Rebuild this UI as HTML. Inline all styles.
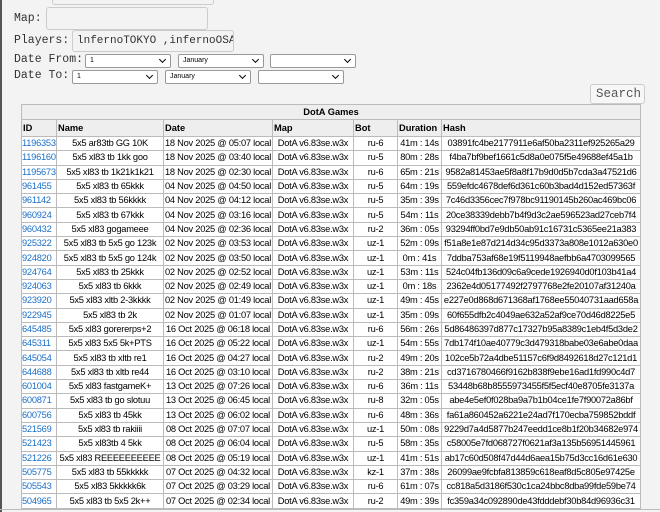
<!DOCTYPE html>
<html><head><style>
body{margin:0;width:660px;height:512px;background:#f3f3f4;font-family:"Liberation Mono",monospace;position:relative;overflow:hidden}
.lb{position:absolute;left:0;top:0;width:2px;height:512px;background:#555}
.lbl{position:absolute;left:14px;font-size:11.5px;color:#333}
.inp{position:absolute;background:#f3f3f4;border:1px solid #ccc;border-radius:3px;box-sizing:border-box}
.sel{position:absolute;height:14px;background:#fff;border:1px solid #999;border-radius:2px;box-sizing:border-box;font:7px "Liberation Sans",sans-serif;padding:2px 0 0 4px;color:#000}
.sel:after{content:"";position:absolute;right:5px;top:2px;width:4px;height:4px;border-right:1.5px solid #000;border-bottom:1.5px solid #000;transform:rotate(45deg)}
table{position:absolute;left:21px;top:104px;width:619px;border-collapse:collapse;background:#fff;font:9.3px "Liberation Sans",Arial,sans-serif;letter-spacing:-0.25px;table-layout:fixed}
td,th{border:1px solid #bbb;padding:0 1px;line-height:11px;height:13.3px;white-space:nowrap;overflow:hidden;text-align:center}
th{background:#eee;text-align:left;font-weight:bold;letter-spacing:0}
tr.h1 th{height:14px}
tr.h2 th{height:16px}
td:first-child{text-align:left;color:#1a6fc8;padding:0}
</style></head><body>
<div class="lb"></div>
<div class="inp" style="left:52px;top:-5px;width:162px;height:10px"></div>
<div class="lbl" style="top:12px">Map:</div>
<div class="inp" style="left:46px;top:7px;width:162px;height:23px"></div>
<div class="lbl" style="top:34px">Players:</div>
<div class="inp" style="left:72px;top:30px;width:162px;height:22px;font-size:11px;padding:4px 0 0 4px;color:#333;overflow:hidden;white-space:nowrap">lnfernoTOKYO ,infernoOSA</div>
<div class="lbl" style="top:53px">Date From:</div>
<div class="sel" style="left:85px;top:54px;width:86px">1</div>
<div class="sel" style="left:178px;top:54px;width:86px">January</div>
<div class="sel" style="left:270px;top:54px;width:86px"></div>
<div class="lbl" style="top:69px">Date To:</div>
<div class="sel" style="left:72px;top:70px;width:86px">1</div>
<div class="sel" style="left:165px;top:70px;width:86px">January</div>
<div class="sel" style="left:258px;top:70px;width:86px"></div>
<div class="inp" style="left:590px;top:84px;width:55px;height:20px;font-size:12.5px;padding:2px 0 0 5px;color:#555;background:#f7f7f7">Search</div>
<table>
<colgroup><col style="width:35px"><col style="width:107px"><col style="width:109px"><col style="width:81px"><col style="width:44px"><col style="width:44px"><col style="width:199px"></colgroup>
<tr class="h1"><th colspan="7" style="text-align:center">DotA Games</th></tr>
<tr class="h2"><th>ID</th><th>Name</th><th>Date</th><th>Map</th><th>Bot</th><th>Duration</th><th>Hash</th></tr>
<tr><td>1196353</td><td>5x5 ar83tb GG 10K</td><td>18 Nov 2025 @ 05:07 local</td><td>DotA v6.83se.w3x</td><td>ru-6</td><td>41m : 14s</td><td>03891fc4be2177911e6af50ba2311ef925265a29</td></tr>
<tr><td>1196160</td><td>5x5 xl83 tb 1kk goo</td><td>18 Nov 2025 @ 03:40 local</td><td>DotA v6.83se.w3x</td><td>ru-5</td><td>80m : 28s</td><td>f4ba7bf9bef1661c5d8a0e075f5e49688ef45a1b</td></tr>
<tr><td>1195673</td><td>5x5 xl83 tb 1k21k1k21</td><td>18 Nov 2025 @ 02:30 local</td><td>DotA v6.83se.w3x</td><td>ru-6</td><td>65m : 21s</td><td>9582a81453ae5f8a8f17b9d0d5b7cda3a47521d6</td></tr>
<tr><td>961455</td><td>5x5 xl83 tb 65kkk</td><td>04 Nov 2025 @ 04:50 local</td><td>DotA v6.83se.w3x</td><td>ru-5</td><td>64m : 19s</td><td>559efdc4678def6d361c60b3bad4d152ed57363f</td></tr>
<tr><td>961142</td><td>5x5 xl83 tb 56kkkk</td><td>04 Nov 2025 @ 04:12 local</td><td>DotA v6.83se.w3x</td><td>ru-5</td><td>35m : 39s</td><td>7c46d3356cec7f978bc91190145b260ac469bc06</td></tr>
<tr><td>960924</td><td>5x5 xl83 tb 67kkk</td><td>04 Nov 2025 @ 03:16 local</td><td>DotA v6.83se.w3x</td><td>ru-5</td><td>54m : 11s</td><td>20ce38339debb7b4f9d3c2ae596523ad27ceb7f4</td></tr>
<tr><td>960432</td><td>5x5 xl83 gogameee</td><td>04 Nov 2025 @ 02:36 local</td><td>DotA v6.83se.w3x</td><td>ru-2</td><td>36m : 05s</td><td>93294ff0bd7e9db50ab91c16731c5365ee21a383</td></tr>
<tr><td>925322</td><td>5x5 xl83 tb 5x5 go 123k</td><td>02 Nov 2025 @ 03:53 local</td><td>DotA v6.83se.w3x</td><td>uz-1</td><td>52m : 09s</td><td>f51a8e1e87d214d34c95d3373a808e1012a630e0</td></tr>
<tr><td>924820</td><td>5x5 xl83 tb 5x5 go 124k</td><td>02 Nov 2025 @ 03:50 local</td><td>DotA v6.83se.w3x</td><td>uz-1</td><td>0m : 41s</td><td>7ddba753af68e19f5119948aefbb6a4703099565</td></tr>
<tr><td>924764</td><td>5x5 xl83 tb 25kkk</td><td>02 Nov 2025 @ 02:52 local</td><td>DotA v6.83se.w3x</td><td>uz-1</td><td>53m : 11s</td><td>524c04fb136d09c6a9cede1926940d0f103b41a4</td></tr>
<tr><td>924063</td><td>5x5 xl83 tb 6kkk</td><td>02 Nov 2025 @ 02:49 local</td><td>DotA v6.83se.w3x</td><td>uz-1</td><td>0m : 18s</td><td>2362e4d05177492f2797768e2fe20107af31240a</td></tr>
<tr><td>923920</td><td>5x5 xl83 xltb 2-3kkkk</td><td>02 Nov 2025 @ 01:49 local</td><td>DotA v6.83se.w3x</td><td>uz-1</td><td>49m : 45s</td><td>e227e0d868d671368af1768ee55040731aad658a</td></tr>
<tr><td>922945</td><td>5x5 xl83 tb 2k</td><td>02 Nov 2025 @ 01:07 local</td><td>DotA v6.83se.w3x</td><td>uz-1</td><td>35m : 09s</td><td>60f655dfb2c4049ae632a52af9ce70d46d8225e5</td></tr>
<tr><td>645485</td><td>5x5 xl83 gorererps+2</td><td>16 Oct 2025 @ 06:18 local</td><td>DotA v6.83se.w3x</td><td>ru-6</td><td>56m : 26s</td><td>5d86486397d877c17327b95a8389c1eb4f5d3de2</td></tr>
<tr><td>645311</td><td>5x5 xl83 5x5 5k+PTS</td><td>16 Oct 2025 @ 05:22 local</td><td>DotA v6.83se.w3x</td><td>uz-1</td><td>54m : 55s</td><td>7db174f10ae40779c3d479318babe03e6abe0daa</td></tr>
<tr><td>645054</td><td>5x5 xl83 tb xltb re1</td><td>16 Oct 2025 @ 04:27 local</td><td>DotA v6.83se.w3x</td><td>ru-2</td><td>49m : 20s</td><td>102ce5b72a4dbe51157c6f9d8492618d27c121d1</td></tr>
<tr><td>644688</td><td>5x5 xl83 tb xltb re44</td><td>16 Oct 2025 @ 03:10 local</td><td>DotA v6.83se.w3x</td><td>ru-2</td><td>38m : 21s</td><td>cd3716780466f9162b838f9ebe16ad1fd990c4d7</td></tr>
<tr><td>601004</td><td>5x5 xl83 fastgameK+</td><td>13 Oct 2025 @ 07:26 local</td><td>DotA v6.83se.w3x</td><td>ru-6</td><td>36m : 11s</td><td>53448b68b8555973455f5f5ecf40e8705fe3137a</td></tr>
<tr><td>600871</td><td>5x5 xl83 tb go slotuu</td><td>13 Oct 2025 @ 06:45 local</td><td>DotA v6.83se.w3x</td><td>ru-8</td><td>32m : 05s</td><td>abe4e5ef0f028ba9a7b1b04ce1fe7f90072a86bf</td></tr>
<tr><td>600756</td><td>5x5 xl83 tb 45kk</td><td>13 Oct 2025 @ 06:02 local</td><td>DotA v6.83se.w3x</td><td>ru-6</td><td>48m : 36s</td><td>fa61a860452a6221e24ad7f170ecba759852bddf</td></tr>
<tr><td>521569</td><td>5x5 xl83 tb rakiiii</td><td>08 Oct 2025 @ 07:07 local</td><td>DotA v6.83se.w3x</td><td>uz-1</td><td>50m : 08s</td><td>9229d7a4d5877b247eedd1ce8b1f20b34682e974</td></tr>
<tr><td>521423</td><td>5x5 xl83tb 4 5kk</td><td>08 Oct 2025 @ 06:04 local</td><td>DotA v6.83se.w3x</td><td>ru-5</td><td>58m : 35s</td><td>c58005e7fd068727f0621af3a135b56951445961</td></tr>
<tr><td>521226</td><td>5x5 xl83 REEEEEEEEEE</td><td>08 Oct 2025 @ 05:19 local</td><td>DotA v6.83se.w3x</td><td>uz-1</td><td>41m : 51s</td><td>ab17c60d508f47d44d6aea15b75d3cc16d61e630</td></tr>
<tr><td>505775</td><td>5x5 xl83 tb 55kkkkk</td><td>07 Oct 2025 @ 04:32 local</td><td>DotA v6.83se.w3x</td><td>kz-1</td><td>37m : 38s</td><td>26099ae9fcbfa813859c618eaf8d5c805e97425e</td></tr>
<tr><td>505543</td><td>5x5 xl83 5kkkkk6k</td><td>07 Oct 2025 @ 03:29 local</td><td>DotA v6.83se.w3x</td><td>ru-6</td><td>61m : 07s</td><td>cc818a5d3186f530c1ca24bbc8dba99fde59be74</td></tr>
<tr><td>504965</td><td>5x5 xl83 tb 5x5 2k++</td><td>07 Oct 2025 @ 02:34 local</td><td>DotA v6.83se.w3x</td><td>ru-2</td><td>49m : 39s</td><td>fc359a34c092890de43fdddebf30b84d96936c31</td></tr>
</table>
<div style="position:absolute;left:0;top:509px;width:660px;height:1px;background:#bbb"></div>
</body></html>
